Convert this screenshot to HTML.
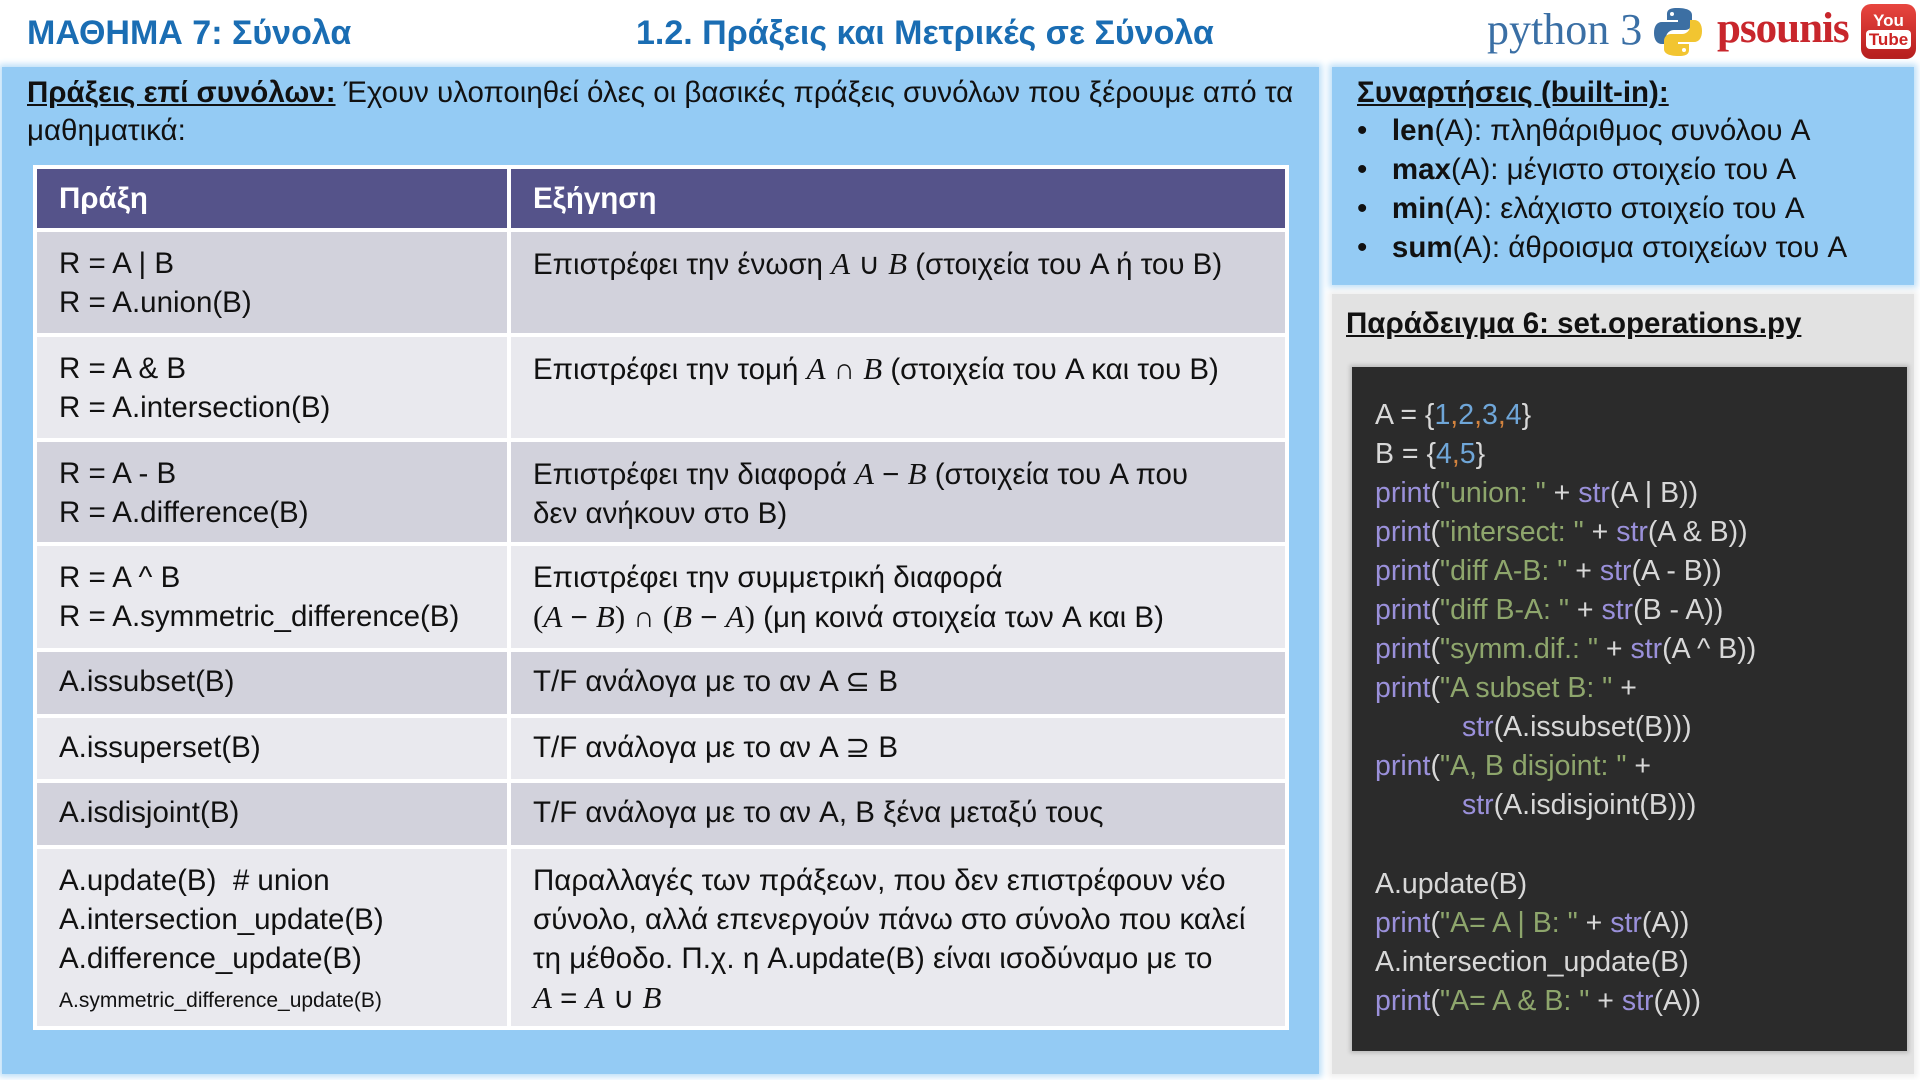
<!DOCTYPE html>
<html><head><meta charset="utf-8">
<style>
*{margin:0;padding:0;box-sizing:border-box}
body{width:1920px;height:1080px;background:#fff;position:relative;overflow:hidden;font-family:"Liberation Sans","DejaVu Sans",sans-serif;color:#111}
.abs{position:absolute;white-space:nowrap}
.t1{left:27px;top:14px;font-size:34px;font-weight:bold;color:#1a6db3}
.t2{left:636px;top:14px;font-size:34px;font-weight:bold;color:#1a6db3}
.panel{position:absolute;background:#94cbf4;box-shadow:0 0 6px 3px #bfe0f8}
.gray{position:absolute;background:#e2e2e2;box-shadow:0 0 6px 3px #eee}
.txt{font-size:29.5px;line-height:39px}
table{position:absolute;left:33px;top:165px;width:1256px;border-collapse:collapse;font-size:29.5px;line-height:39px}
td,th{border:4px solid #fff;vertical-align:top;padding:0 0 0 22px;text-align:left}
th{background:#55538a;color:#fff;font-weight:bold;height:63px;vertical-align:middle}
tr.a td{background:#d2d2dc}
tr.b td{background:#e9e9ee}
td{padding-top:12px}
.m{font-family:"Liberation Serif",serif;font-style:italic;font-size:31px}
.code{position:absolute;left:1352px;top:367px;width:555px;height:684px;background:#2b2b2b;box-shadow:0 0 4px 2px #bbb}
.cl{position:absolute;left:1375px;font-size:28.5px;color:#d8d8d8;white-space:pre}
.p{color:#9a90da}.s{color:#8ea66c}.n{color:#6fa6d8}.c{color:#d5843e}
</style></head><body>
<div class="abs t1">ΜΑΘΗΜΑ 7: Σύνολα</div>
<div class="abs t2">1.2. Πράξεις και Μετρικές σε Σύνολα</div>

<div class="abs" style="left:1487px;top:4px;font-family:'Liberation Serif',serif;font-size:44px;color:#3a6fa5">python 3</div>
<svg class="abs" style="left:1653px;top:6px" width="50" height="52" viewBox="0 0 50 52">
<path d="M24 2c-10 0-10 4-10 7v5h11v2H9c-5 0-8 4-8 11s3 11 8 11h4v-6c0-5 4-8 8-8h11c4 0 7-3 7-7V9c0-4-4-7-15-7z" fill="#3c6fa3"/>
<path d="M26 50c10 0 10-4 10-7v-5H25v-2h16c5 0 8-4 8-11s-3-11-8-11h-4v6c0 5-4 8-8 8H18c-4 0-7 3-7 7v8c0 4 4 7 15 7z" fill="#f2c531"/>
<circle cx="19" cy="8" r="2" fill="#fff"/><circle cx="31" cy="44" r="2" fill="#fff"/></svg>
<div class="abs" style="left:1717px;top:4px;font-family:'Liberation Serif',serif;font-size:43px;font-weight:bold;color:#c8262c;letter-spacing:-1px">psounis</div>
<div class="abs" style="left:1861px;top:4px;width:55px;height:55px;border-radius:10px;background:linear-gradient(#e8463f,#b51d1d);color:#fff;font-size:17px;font-weight:bold;text-align:center;line-height:19px;padding-top:7px">You<br><span style="background:#fff;color:#c22;border-radius:4px;padding:0 3px">Tube</span></div>

<div class="panel" style="left:2px;top:67px;width:1317px;height:1007px"></div>
<div class="panel" style="left:1332px;top:67px;width:582px;height:218px"></div>
<div class="gray" style="left:1332px;top:294px;width:582px;height:780px"></div>

<div class="abs txt" style="left:27px;top:73px"><b style="text-decoration:underline">Πράξεις επί συνόλων:</b> Έχουν υλοποιηθεί όλες οι βασικές πράξεις συνόλων που ξέρουμε από τα</div>
<div class="abs txt" style="left:27px;top:111px">μαθηματικά:</div>

<table>
<tr><th style="width:474px">Πράξη</th><th>Εξήγηση</th></tr>
<tr class="a" style="height:105px"><td>R = A | B<br>R = A.union(B)</td><td>Επιστρέφει την ένωση <span class="m">A</span> ∪ <span class="m">B</span> (στοιχεία του A ή του B)</td></tr>
<tr class="b" style="height:105px"><td>R = A &amp; B<br>R = A.intersection(B)</td><td>Επιστρέφει την τομή <span class="m">A</span> ∩ <span class="m">B</span> (στοιχεία του A και του B)</td></tr>
<tr class="a" style="height:104px"><td>R = A - B<br>R = A.difference(B)</td><td>Επιστρέφει την διαφορά <span class="m">A</span> − <span class="m">B</span> (στοιχεία του A που<br>δεν ανήκουν στο B)</td></tr>
<tr class="b" style="height:106px"><td>R = A ^ B<br>R = A.symmetric_difference(B)</td><td>Επιστρέφει την συμμετρική διαφορά<br><span class="m" style="font-style:normal">(</span><span class="m">A</span> − <span class="m">B</span><span class="m" style="font-style:normal">)</span> ∩ <span class="m" style="font-style:normal">(</span><span class="m">B</span> − <span class="m">A</span><span class="m" style="font-style:normal">)</span> (μη κοινά στοιχεία των A και B)</td></tr>
<tr class="a" style="height:66px"><td style="padding-top:10px">A.issubset(B)</td><td style="padding-top:10px">T/F ανάλογα με το αν A ⊆ B</td></tr>
<tr class="b" style="height:65px"><td style="padding-top:10px">A.issuperset(B)</td><td style="padding-top:10px">T/F ανάλογα με το αν A ⊇ B</td></tr>
<tr class="a" style="height:66px"><td style="padding-top:10px">A.isdisjoint(B)</td><td style="padding-top:10px">T/F ανάλογα με το αν A, B ξένα μεταξύ τους</td></tr>
<tr class="b" style="height:181px"><td>A.update(B)&nbsp; # union<br>A.intersection_update(B)<br>A.difference_update(B)<br><span style="font-size:21px;line-height:30px">A.symmetric_difference_update(B)</span></td><td>Παραλλαγές των πράξεων, που δεν επιστρέφουν νέο<br>σύνολο, αλλά επενεργούν πάνω στο σύνολο που καλεί<br>τη μέθοδο. Π.χ. η A.update(B) είναι ισοδύναμο με το<br><span class="m">A</span> = <span class="m">A</span> ∪ <span class="m">B</span></td></tr>
</table>

<div class="abs txt" style="left:1357px;top:73px;font-weight:bold;text-decoration:underline">Συναρτήσεις (built-in):</div>
<div class="abs txt" style="left:1357px;top:111px">•&nbsp;&nbsp;&nbsp;<b>len</b>(A): πληθάριθμος συνόλου A</div>
<div class="abs txt" style="left:1357px;top:150px">•&nbsp;&nbsp;&nbsp;<b>max</b>(A): μέγιστο στοιχείο του A</div>
<div class="abs txt" style="left:1357px;top:189px">•&nbsp;&nbsp;&nbsp;<b>min</b>(A): ελάχιστο στοιχείο του A</div>
<div class="abs txt" style="left:1357px;top:228px">•&nbsp;&nbsp;&nbsp;<b>sum</b>(A): άθροισμα στοιχείων του A</div>
<div class="abs txt" style="left:1346px;top:304px;font-weight:bold;text-decoration:underline">Παράδειγμα 6: set.operations.py</div>

<div class="code"></div>
<div class="cl" style="top:399px">A = {<span class="n">1</span><span class="c">,</span><span class="n">2</span><span class="c">,</span><span class="n">3</span><span class="c">,</span><span class="n">4</span>}</div>
<div class="cl" style="top:438px">B = {<span class="n">4</span><span class="c">,</span><span class="n">5</span>}</div>
<div class="cl" style="top:477px"><span class="p">print</span>(<span class="s">"union: "</span> + <span class="p">str</span>(A | B))</div>
<div class="cl" style="top:516px"><span class="p">print</span>(<span class="s">"intersect: "</span> + <span class="p">str</span>(A &amp; B))</div>
<div class="cl" style="top:555px"><span class="p">print</span>(<span class="s">"diff A-B: "</span> + <span class="p">str</span>(A - B))</div>
<div class="cl" style="top:594px"><span class="p">print</span>(<span class="s">"diff B-A: "</span> + <span class="p">str</span>(B - A))</div>
<div class="cl" style="top:633px"><span class="p">print</span>(<span class="s">"symm.dif.: "</span> + <span class="p">str</span>(A ^ B))</div>
<div class="cl" style="top:672px"><span class="p">print</span>(<span class="s">"A subset B: "</span> +</div>
<div class="cl" style="top:711px;left:1462px"><span class="p">str</span>(A.issubset(B)))</div>
<div class="cl" style="top:750px"><span class="p">print</span>(<span class="s">"A, B disjoint: "</span> +</div>
<div class="cl" style="top:789px;left:1462px"><span class="p">str</span>(A.isdisjoint(B)))</div>
<div class="cl" style="top:868px">A.update(B)</div>
<div class="cl" style="top:907px"><span class="p">print</span>(<span class="s">"A= A | B: "</span> + <span class="p">str</span>(A))</div>
<div class="cl" style="top:946px">A.intersection_update(B)</div>
<div class="cl" style="top:985px"><span class="p">print</span>(<span class="s">"A= A &amp; B: "</span> + <span class="p">str</span>(A))</div>
</body></html>
